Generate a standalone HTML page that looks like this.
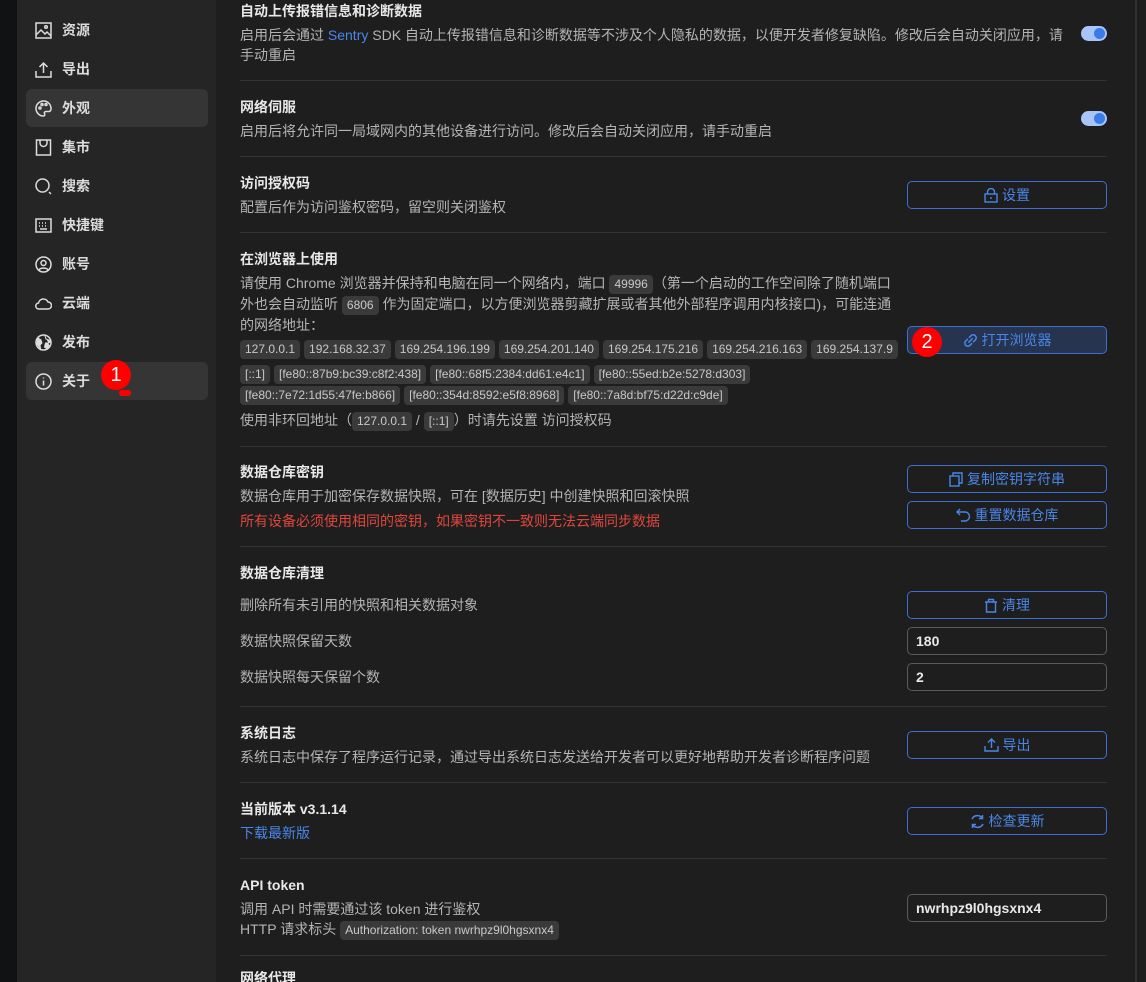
<!DOCTYPE html>
<html><head><meta charset="utf-8"><style>
*{margin:0;padding:0;box-sizing:border-box}
html{overflow:hidden}
body{width:1146px;height:982px;overflow:hidden;background:#1e1e1e;font-family:"Liberation Sans","Noto Sans CJK SC",sans-serif;font-size:14px;color:#d4d4d4;position:relative}
.a{position:absolute;white-space:nowrap;line-height:20px}
.strip{position:absolute;left:0;top:0;width:17px;height:982px;background:#111213}
.side{position:absolute;left:17px;top:0;width:199px;height:982px;background:#252525}
.it{position:absolute;left:26px;width:182px;height:38px;border-radius:6px;font-size:14px;font-weight:bold;color:#dcdcdc}
.it.s{background:#353535}
.it svg{position:absolute;left:9px;top:11px}
.it span{position:absolute;left:36px;top:9px;line-height:20px}
.t{color:#e8e8e8;font-weight:bold}
.d{color:#b4b4b4}
.hr{position:absolute;left:240px;width:867px;height:1px;background:#333}
.btn{position:absolute;left:907px;width:200px;height:28px;border:1px solid #3b6fd0;border-radius:5px;color:#4a86e8;display:flex;align-items:center;justify-content:center;gap:4px;font-size:14px}
.inp{position:absolute;left:907px;width:200px;height:28px;border:1px solid #5a5a5a;border-radius:5px;color:#e8e8e8;padding-left:8px;line-height:26px;font-weight:bold;font-size:14px}
.tg{position:absolute;left:1081px;width:26px;height:15px;border-radius:8px;background:#a8c4f8}
.tg:after{content:"";position:absolute;right:2px;top:2px;width:11px;height:11px;border-radius:50%;background:#3b7be8}
.c{display:inline-block;background:#3a3a3a;border-radius:4px;padding:0 5px;font-size:12px;line-height:19px;color:#c8c8c8}
.chips{position:absolute;left:240px;display:flex;gap:4px}
.b{position:absolute;width:30px;height:30px;border-radius:50%;background:#f00;color:#fff;font-size:20px;text-align:center;line-height:30px}
</style></head><body>
<div class="strip"></div>
<div class="side"></div>
<div class="it" style="top:11px"><svg width="17" height="17" viewBox="0 0 17 17" fill="none" stroke="#ddd" stroke-width="1.5"><rect x="1" y="1" width="15" height="15"/><path d="M1 13l5-5 4 4 2-2 4 4"/><circle cx="11" cy="5" r="1.3"/></svg><span>资源</span></div>
<div class="it" style="top:50px"><svg width="17" height="17" viewBox="0 0 17 17" fill="none" stroke="#ddd" stroke-width="1.5"><path d="M1 10v6h15v-6M8.5 12V2M4.5 6l4-4 4 4"/></svg><span>导出</span></div>
<div class="it s" style="top:89px"><svg width="17" height="17" viewBox="0 0 17 17" fill="none" stroke="#ddd" stroke-width="1.5"><path d="M8.5 1a7.5 7.5 0 0 0 0 15c1.5 0 1.5-1.5 1-2.5s0-2 1.5-2H14a2.5 2.5 0 0 0 2-2.5A7.5 7.5 0 0 0 8.5 1z"/><circle cx="5" cy="8" r="1"/><circle cx="7" cy="4.5" r="1"/><circle cx="11" cy="4.5" r="1"/></svg><span>外观</span></div>
<div class="it" style="top:128px"><svg width="17" height="17" viewBox="0 0 17 17" fill="none" stroke="#ddd" stroke-width="1.5"><rect x="1.5" y="1" width="14" height="15"/><path d="M5 1v3a3.5 3.5 0 0 0 7 0V1"/></svg><span>集市</span></div>
<div class="it" style="top:167px"><svg width="17" height="17" viewBox="0 0 17 17" fill="none" stroke="#ddd" stroke-width="1.5"><circle cx="7.5" cy="7.5" r="6.5"/><path d="M14 14l2 2"/></svg><span>搜索</span></div>
<div class="it" style="top:206px"><svg width="17" height="17" viewBox="0 0 17 17" fill="none" stroke="#ddd" stroke-width="1.5"><rect x="1" y="2" width="15" height="13"/><path d="M4 6h1M7 6h1M10 6h1M13 6h0M4 9h1M7 9h1M10 9h1M5 12h7"/></svg><span>快捷键</span></div>
<div class="it" style="top:245px"><svg width="17" height="17" viewBox="0 0 17 17" fill="none" stroke="#ddd" stroke-width="1.5"><circle cx="8.5" cy="8.5" r="7.5"/><circle cx="8.5" cy="7" r="2.5"/><path d="M4 14c1-2.5 8-2.5 9 0"/></svg><span>账号</span></div>
<div class="it" style="top:284px"><svg width="17" height="17" viewBox="0 0 17 17" fill="none" stroke="#ddd" stroke-width="1.5"><path d="M4 14a3 3 0 0 1-.5-6A5 5 0 0 1 13 7a3.5 3.5 0 0 1 0 7z"/></svg><span>云端</span></div>
<div class="it" style="top:323px"><svg width="17" height="17" viewBox="0 0 17 17" fill="#ddd" stroke="#ddd" stroke-width="1.5"><circle cx="8.5" cy="8.5" r="7.5" fill="none"/><path d="M3 4l3 2 1 3-2 2 .5 3.5L2 10zM10 2l1 3 3 1 1.5 2-2 1-3 0-1 4 2 1.5 3-3" stroke-width="1"/></svg><span>发布</span></div>
<div class="it s" style="top:362px"><svg width="17" height="17" viewBox="0 0 17 17" fill="none" stroke="#ddd" stroke-width="1.5"><circle cx="8.5" cy="8.5" r="7.5"/><path d="M8.5 7.5v5M8.5 4.5v1"/></svg><span>关于</span></div>
<div class="b" style="left:101px;top:360px">1</div>
<div style="position:absolute;left:119px;top:390px;width:12px;height:6px;border-radius:3px;background:#f00"></div>

<div style="position:absolute;left:1135px;top:0;width:2px;height:982px;background:#303030"></div>

<div class="a t" style="left:240px;top:1px">自动上传报错信息和诊断数据</div>
<div class="a d" style="left:240px;top:25px">启用后会通过 <span style="color:#4a86e8">Sentry</span> SDK 自动上传报错信息和诊断数据等不涉及个人隐私的数据，以便开发者修复缺陷。修改后会自动关闭应用，请</div>
<div class="a d" style="left:240px;top:45px">手动重启</div>
<div class="tg" style="top:26px"></div>
<div class="hr" style="top:80px"></div>

<div class="a t" style="left:240px;top:97px">网络伺服</div>
<div class="a d" style="left:240px;top:121px">启用后将允许同一局域网内的其他设备进行访问。修改后会自动关闭应用，请手动重启</div>
<div class="tg" style="top:111px"></div>
<div class="hr" style="top:156px"></div>

<div class="a t" style="left:240px;top:173px">访问授权码</div>
<div class="a d" style="left:240px;top:197px">配置后作为访问鉴权密码，留空则关闭鉴权</div>
<div class="btn" style="top:181px"><svg width="14" height="15" viewBox="0 0 14 15" fill="none" stroke="#4a86e8" stroke-width="1.4"><rect x="1" y="6" width="12" height="8"/><path d="M3.5 6V4a3.5 3.5 0 0 1 7 0v2M7 9v2"/></svg>设置</div>
<div class="hr" style="top:232px"></div>

<div class="a t" style="left:240px;top:249px">在浏览器上使用</div>
<div class="a d" style="left:240px;top:273px">请使用 Chrome 浏览器并保持和电脑在同一个网络内，端口 <span class="c">49996</span>（第一个启动的工作空间除了随机端口</div>
<div class="a d" style="left:240px;top:294px">外也会自动监听 <span class="c">6806</span> 作为固定端口，以方便浏览器剪藏扩展或者其他外部程序调用内核接口)，可能连通</div>
<div class="a d" style="left:240px;top:315px">的网络地址：</div>
<div class="chips" style="top:340px"><span class="c">127.0.0.1</span><span class="c">192.168.32.37</span><span class="c">169.254.196.199</span><span class="c">169.254.201.140</span><span class="c">169.254.175.216</span><span class="c">169.254.216.163</span><span class="c">169.254.137.9</span></div>
<div class="chips" style="top:365px"><span class="c">[::1]</span><span class="c">[fe80::87b9:bc39:c8f2:438]</span><span class="c">[fe80::68f5:2384:dd61:e4c1]</span><span class="c">[fe80::55ed:b2e:5278:d303]</span></div>
<div class="chips" style="top:386px"><span class="c">[fe80::7e72:1d55:47fe:b866]</span><span class="c">[fe80::354d:8592:e5f8:8968]</span><span class="c">[fe80::7a8d:bf75:d22d:c9de]</span></div>
<div class="a d" style="left:240px;top:410px">使用非环回地址（<span class="c">127.0.0.1</span> / <span class="c">[::1]</span>）时请先设置 访问授权码</div>
<div class="btn" style="top:326px;background:#26344f"><svg width="15" height="15" viewBox="0 0 14 14" fill="none" stroke="#4a86e8" stroke-width="1.4"><path d="M5 9l4-4M5.5 4.5L7.5 2.5a2.5 2.5 0 0 1 4 4L9.5 8.5M8.5 9.5L6.5 11.5a2.5 2.5 0 0 1-4-4L4.5 5.5"/></svg>打开浏览器</div>
<div class="b" style="left:912px;top:327px">2</div>
<div class="hr" style="top:446px"></div>

<div class="a t" style="left:240px;top:462px">数据仓库密钥</div>
<div class="a d" style="left:240px;top:486px">数据仓库用于加密保存数据快照，可在 [数据历史] 中创建快照和回滚快照</div>
<div class="a" style="left:240px;top:511px;color:#e0463c">所有设备必须使用相同的密钥，如果密钥不一致则无法云端同步数据</div>
<div class="btn" style="top:465px"><svg width="14" height="15" viewBox="0 0 14 15" fill="none" stroke="#4a86e8" stroke-width="1.4"><rect x="1" y="4" width="9" height="10"/><path d="M4 4V1h9v10h-3"/></svg>复制密钥字符串</div>
<div class="btn" style="top:501px"><svg width="15" height="14" viewBox="0 0 15 14" fill="none" stroke="#4a86e8" stroke-width="1.4"><path d="M4 1L1 4l3 3M1 4h8a4.5 4.5 0 0 1 0 9H5"/></svg>重置数据仓库</div>
<div class="hr" style="top:546px"></div>

<div class="a t" style="left:240px;top:563px">数据仓库清理</div>
<div class="a d" style="left:240px;top:595px">删除所有未引用的快照和相关数据对象</div>
<div class="a d" style="left:240px;top:631px">数据快照保留天数</div>
<div class="a d" style="left:240px;top:667px">数据快照每天保留个数</div>
<div class="btn" style="top:591px"><svg width="14" height="15" viewBox="0 0 14 15" fill="none" stroke="#4a86e8" stroke-width="1.4"><path d="M1 4h12M4.5 4V1.5h5V4M2.5 4v10h9V4"/></svg>清理</div>
<div class="inp" style="top:627px">180</div>
<div class="inp" style="top:663px">2</div>
<div class="hr" style="top:706px"></div>

<div class="a t" style="left:240px;top:723px">系统日志</div>
<div class="a d" style="left:240px;top:747px">系统日志中保存了程序运行记录，通过导出系统日志发送给开发者可以更好地帮助开发者诊断程序问题</div>
<div class="btn" style="top:731px"><svg width="15" height="14" viewBox="0 0 15 14" fill="none" stroke="#4a86e8" stroke-width="1.4"><path d="M1 8v5h13V8M7.5 10V1M4 4.5l3.5-3.5 3.5 3.5"/></svg>导出</div>
<div class="hr" style="top:782px"></div>

<div class="a t" style="left:240px;top:799px">当前版本 v3.1.14</div>
<div class="a" style="left:240px;top:823px;color:#4a86e8">下载最新版</div>
<div class="btn" style="top:807px"><svg width="15" height="15" viewBox="0 0 15 15" fill="none" stroke="#4a86e8" stroke-width="1.5"><path d="M12.5 4.5A6 6 0 0 0 2 5M2.5 10.5A6 6 0 0 0 13 10M12.5 1v3.5H9M2.5 14v-3.5H6"/></svg>检查更新</div>
<div class="hr" style="top:858px"></div>

<div class="a t" style="left:240px;top:875px">API token</div>
<div class="a d" style="left:240px;top:899px">调用 API 时需要通过该 token 进行鉴权</div>
<div class="a d" style="left:240px;top:919px">HTTP 请求标头 <span class="c">Authorization: token nwrhpz9l0hgsxnx4</span></div>
<div class="inp" style="top:894px">nwrhpz9l0hgsxnx4</div>
<div class="hr" style="top:955px"></div>
<div class="a t" style="left:240px;top:971px;line-height:14px;height:11px;overflow:hidden">网络代理</div>
</body></html>
